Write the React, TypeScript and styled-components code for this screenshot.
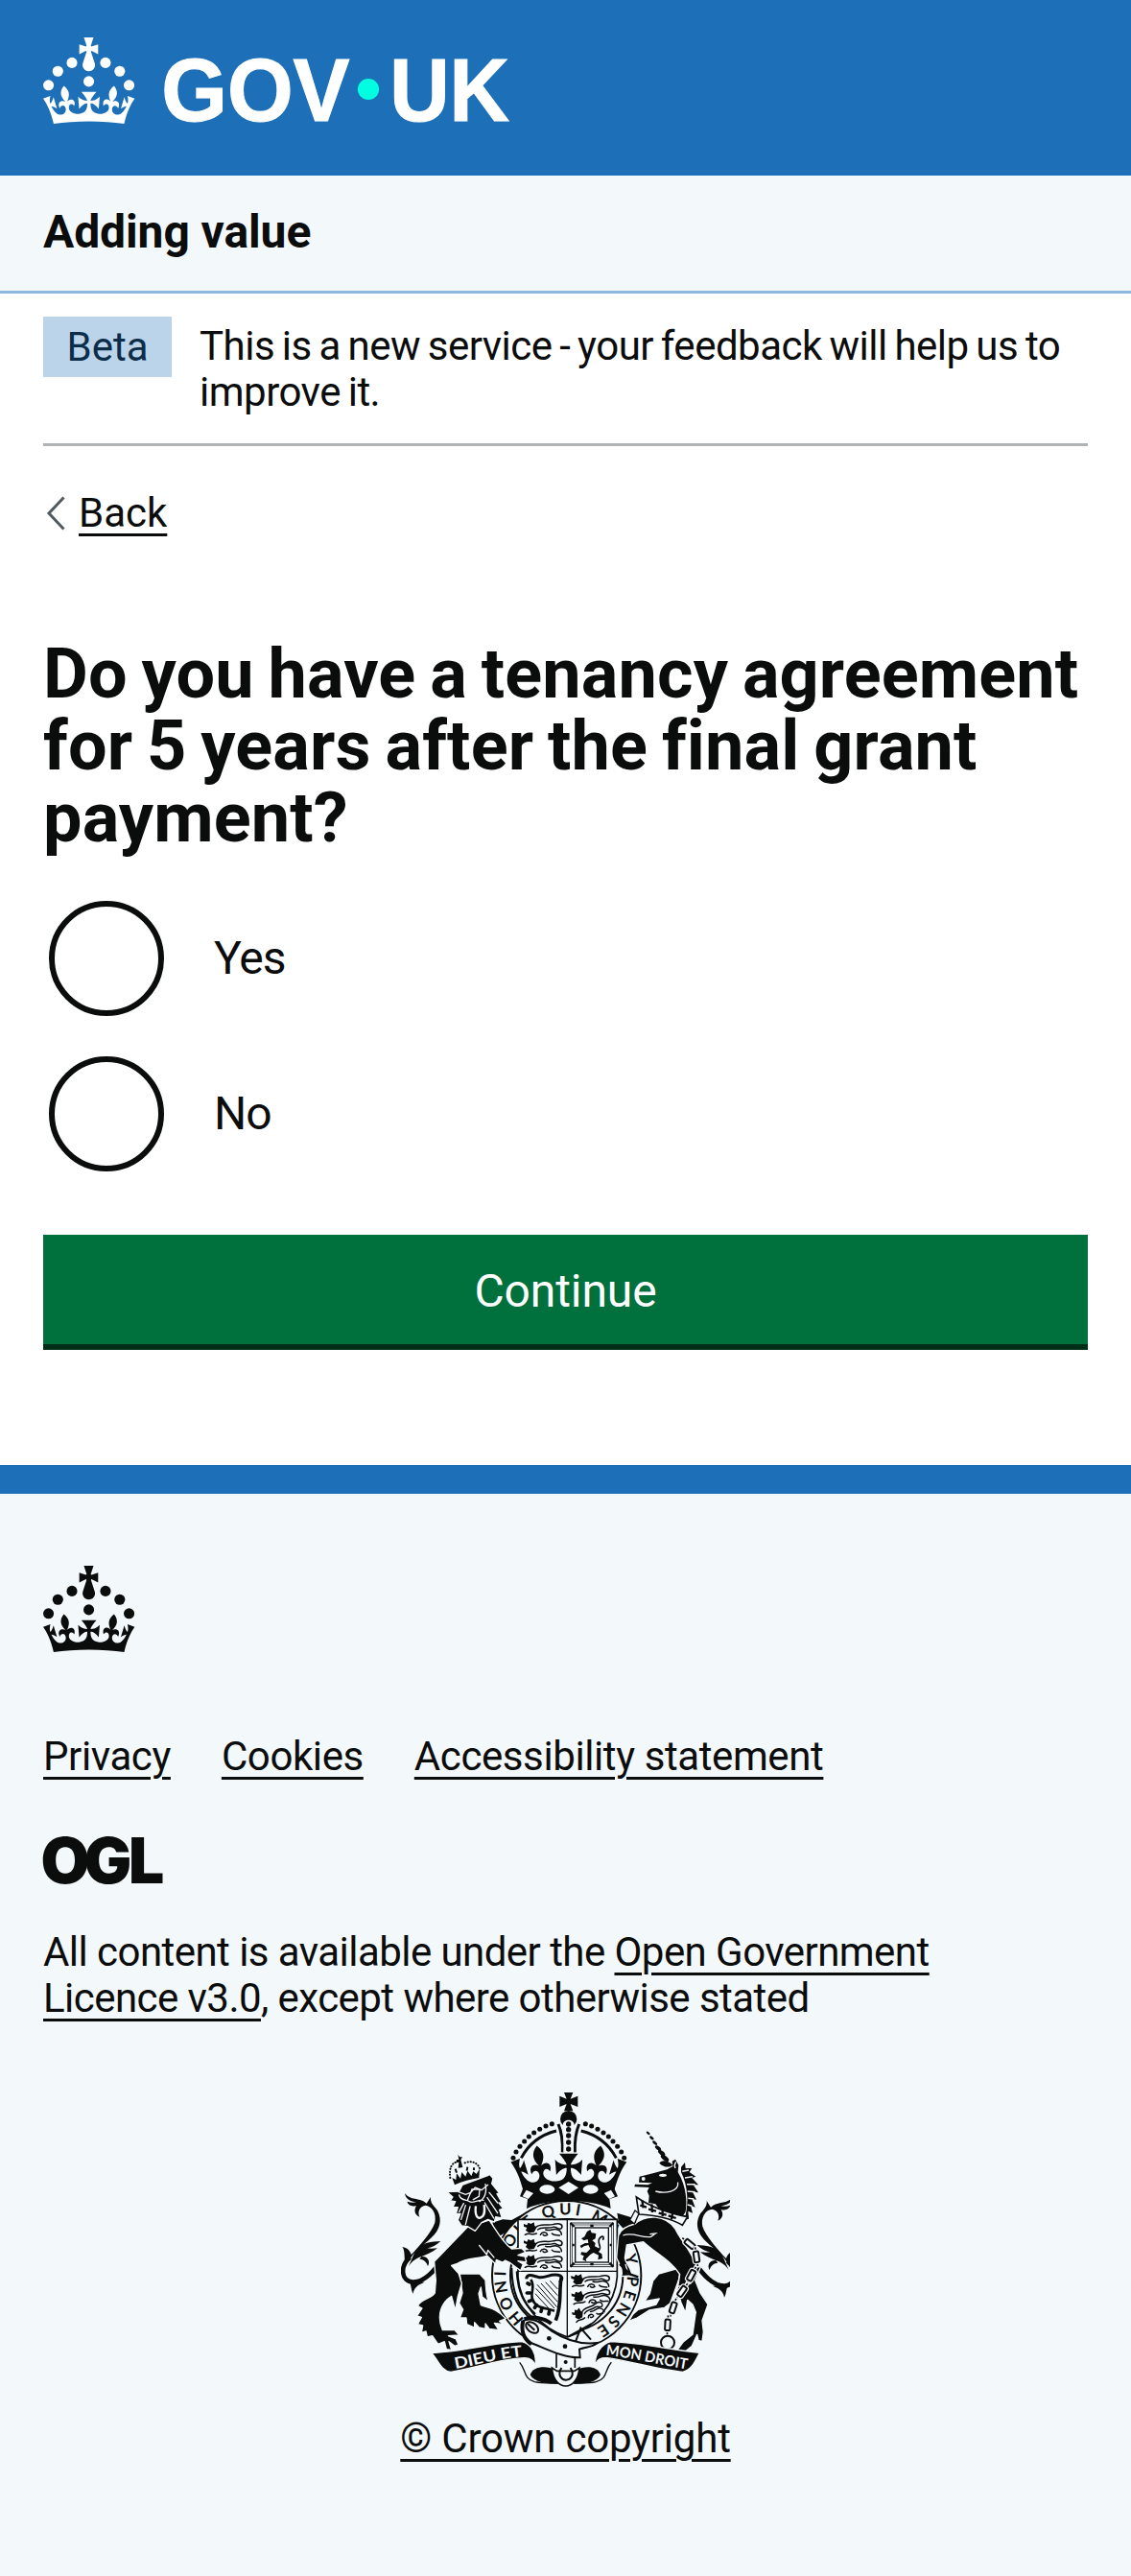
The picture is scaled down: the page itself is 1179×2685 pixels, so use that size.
import React, { useState } from 'react';
import styled, { createGlobalStyle } from 'styled-components';

const ink = '#0b0c0c';
const blue = '#1d70b8';
const pale = '#f3f8fb';

const GlobalStyle = createGlobalStyle`
  *, *::before, *::after { box-sizing: border-box; }
  body { margin: 0; background: ${pale}; }
`;

const Page = styled.div`
  display: flex;
  flex-direction: column;
  min-height: 2685px;
  background: #fff;
  color: ${ink};
  font-family: Roboto, "Liberation Sans", sans-serif;
  font-size: 42px;
  line-height: 48px;
  letter-spacing: -0.55px;
`;

const Header = styled.header`
  height: 183px;
  padding: 39px 45px 0;
  background: ${blue};
  color: #fff;
`;

const Svg = styled.svg`
  display: block;
  overflow: visible;
`;

const LogoText = styled.text`
  font-family: "Liberation Sans", Arial, sans-serif;
  font-weight: 700;
  font-size: 62px;
  letter-spacing: 0;
  fill: currentColor;
  stroke: currentColor;
  stroke-width: 0.8px;
`;

const ServiceBar = styled.div`
  display: flex;
  align-items: center;
  height: 123px;
  padding: 0 45px 2px;
  background: ${pale};
  border-bottom: 3px solid #8eb8dc;
  font-size: 48px;
  font-weight: 700;
  letter-spacing: -0.1px;
`;

const Container = styled.div`
  padding: 0 45px;
`;

const PhaseBanner = styled.div`
  display: flex;
  align-items: flex-start;
  gap: 29px;
  height: 159px;
  padding-top: 24px;
  border-bottom: 3px solid #b1b4b6;
`;

const Tag = styled.strong`
  display: flex;
  align-items: center;
  justify-content: center;
  width: 134px;
  height: 63px;
  background: #bbd4ea;
  color: #0c2d4a;
  font-weight: 400;
  letter-spacing: 0;
`;

const PhaseText = styled.span`
  flex: 1;
  padding-top: 7px;
  letter-spacing: -0.5px;
  word-spacing: -2.2px;
`;

const Link = styled.a`
  color: ${ink};
  text-decoration: underline;
  text-decoration-thickness: 3px;
  text-underline-offset: 7px;
`;

const BackRow = styled.div`
  display: flex;
  align-items: center;
  gap: 14px;
  margin-top: 46px;
  padding-left: 3px;
  letter-spacing: 0;
`;

const Heading = styled.h1`
  margin: 106px 0 49px;
  font-size: 72px;
  line-height: 75px;
  font-weight: 700;
  letter-spacing: 0.15px;
  word-spacing: -3.2px;
`;

const Radios = styled.div`
  display: flex;
  flex-direction: column;
  gap: 42px;
  padding-left: 6px;
`;

const RadioRow = styled.label`
  display: flex;
  align-items: center;
  gap: 52px;
  height: 120px;
  padding-bottom: 1px;
  font-size: 48px;
  letter-spacing: -1px;
`;

const RadioInput = styled.input`
  appearance: none;
  flex: none;
  width: 120px;
  height: 120px;
  margin: 0;
  border: 6px solid ${ink};
  border-radius: 50%;
  background: ${p => (p.checked ? `radial-gradient(circle, ${ink} 30px, transparent 31px)` : 'transparent')};
`;

const Button = styled.button`
  display: block;
  width: 100%;
  height: 120px;
  margin: 66px 0 120px;
  padding: 3px 0 0;
  border: 0;
  border-bottom: 6px solid #002d18;
  background: #00703c;
  color: #fff;
  font-family: inherit;
  font-size: 48px;
  letter-spacing: -0.1px;
`;

const Footer = styled.footer`
  flex: 1;
  padding: 75px 45px 0;
  border-top: 30px solid ${blue};
  background: ${pale};
`;

const FooterLinks = styled.nav`
  display: flex;
  gap: 53px;
  margin-top: 85px;
  letter-spacing: -0.4px;
`;

const OglSvg = styled(Svg)`
  margin-top: 59px;
`;

const OglText = styled.text`
  font-family: Inter, sans-serif;
  font-weight: 900;
  font-size: 66px;
  letter-spacing: 0;
  fill: ${ink};
`;

const Licence = styled.p`
  max-width: 1000px;
  margin: 47px 0 73px;
`;

const Copyright = styled.div`
  display: flex;
  flex-direction: column;
  align-items: center;
  gap: 28px;
  letter-spacing: -0.2px;
`;

const CrestText = styled.text<{ $size: number; $fill: string }>`
  font-family: Lato, "Open Sans", sans-serif;
  font-weight: 700;
  font-size: ${p => p.$size}px;
  letter-spacing: 0;
  word-spacing: 0;
  fill: ${p => p.$fill};
`;

const crownBase =
  'M37,37.9s-3.4,3.8-4.1,6.1c2.2,0,4.2-.5,6.4-2.8l-.7,8.5c-2-2.8-4.4-4.1-5.7-3.8.1,3.1.5,6.7,5.8,7.2,3.7.3,6.7-1.5,7-3.8.4-2.6-2-4.3-3.7-1.6-1.4-4.5,2.4-6.1,4.9-3.2-1.9-4.5-1.8-7.7,2.4-10.9,3,4,2.6,7.3-1.2,11.1,2.4-1.3,6.2,0,4,4.6-1.2-2.8-3.7-2.2-4.2.2-.3,1.7.7,3.7,3,4.2,1.9.3,4.7-.9,7-5.9-1.3,0-2.4.7-3.9,1.7l2.4-8c.6,2.3,1.4,3.7,2.2,4.5.6-1.6.5-2.8,0-5.3l5,1.8c-2.6,3.6-5.2,8.7-7.3,17.5-7.4-1.1-15.7-1.7-24.5-1.7h0c-8.8,0-17.1.6-24.5,1.7-2.1-8.9-4.7-13.9-7.3-17.5l5-1.8c-.5,2.5-.6,3.7,0,5.3.8-.8,1.6-2.3,2.2-4.5l2.4,8c-1.5-1-2.6-1.7-3.9-1.7,2.3,5,5.2,6.2,7,5.9,2.3-.4,3.3-2.4,3-4.2-.5-2.4-3-3.1-4.2-.2-2.2-4.6,1.6-6,4-4.6-3.7-3.7-4.2-7.1-1.2-11.1,4.2,3.2,4.3,6.4,2.4,10.9,2.5-2.8,6.3-1.3,4.9,3.2-1.8-2.7-4.1-1-3.7,1.6.3,2.3,3.3,4.1,7,3.8,5.4-.5,5.7-4.2,5.8-7.2-1.3-.2-3.7,1-5.7,3.8l-.7-8.5c2.2,2.3,4.2,2.7,6.4,2.8-.7-2.3-4.1-6.1-4.1-6.1h10.6Z';

const crownCross =
  'M33.1,9.8c.2-.1.3-.3.5-.5l4.6,2.4v-6.8l-4.6,1.5c-.1-.2-.3-.3-.5-.5l1.9-5.9h-6.7l1.9,5.9c-.2.1-.3.3-.5.5l-4.6-1.5v6.8l4.6-2.4c.1.2.3.3.5.5l-2.6,8c-.9,2.8,1.2,5.7,4.1,5.7h0c3,0,5.1-2.9,4.1-5.7l-2.6-8Z';

const crownPearls = [[20, 17.6], [10.2, 23.5], [3.7, 33.2], [31.7, 30.6], [43.3, 17.6], [53.2, 23.5], [59.7, 33.2]];

const Crown = () => (
  <g>
    {crownPearls.map(([x, y]) => <circle key={x} cx={x} cy={y} r={3.7} />)}
    <path d={crownCross} />
    <path d={crownBase} />
  </g>
);

const GovLogo = () => (
  <Svg width="486" height="90" viewBox="0 0 324 60" fill="currentColor" role="img" aria-label="GOV.UK">
    <Crown />
    <LogoText x="82.2" y="57.8" textLength="130.8" lengthAdjust="spacingAndGlyphs">GOV</LogoText>
    <circle cx="226" cy="36" r="7.4" fill="#00ffe0" />
    <LogoText x="240.8" y="57.8" textLength="83.2" lengthAdjust="spacingAndGlyphs">UK</LogoText>
  </Svg>
);

const Tail = () => (
  <g fill={ink}>
    <path d="M66 378C82 402 112 390 134 410L147 390C145 410 158 418 168 432C184 462 176 492 150 516C120 545 92 560 80 590L66 592C64 570 66 556 58 546C76 548 84 562 86 570C110 545 150 500 160 470C166 440 150 418 130 416C110 420 106 438 112 452C96 446 94 430 102 418C84 420 74 412 74 404C84 408 94 408 102 406C84 404 68 396 66 378Z" />
    <path d="M98 560C120 530 150 530 178 528C165 540 150 548 136 550C150 552 158 550 168 550C150 565 130 572 108 580C96 586 84 596 78 606Z" />
    <path d="M82 578C50 606 54 652 90 656C128 658 158 620 186 582" fill="none" stroke={ink} strokeWidth="14" />
    <path d="M78 652C88 666 84 680 92 692C94 675 105 665 128 656Z" />
    <path d="M118 576C140 574 146 594 138 606C134 594 128 586 112 584Z" />
  </g>
);

/* Walking lion of the royal shield, about 125 by 46 units. */
const Passant = () => (
  <g fill="none" stroke={ink} strokeWidth="4.5" strokeLinecap="round">
    <path d="M4 8L14 12L18 4L26 8L36 3L38 14L44 20L36 34L20 36L10 28L14 20L4 16Z" fill={ink} stroke="none" />
    <path d="M42 18C58 4 78 16 98 9C118 3 128 12 122 22C112 28 108 16 96 18C80 24 62 14 48 26" />
    <path d="M72 26C88 32 98 20 110 26C120 30 122 36 122 42" />
    <path d="M8 42C20 34 28 44 44 38M56 42C62 30 76 34 78 42C72 46 66 44 64 42M92 38C98 46 108 42 116 44" />
  </g>
);

const domeDots = [[405, 268], [414, 249], [426, 232], [440, 216], [454, 201], [470, 189], [488, 178], [507, 168], [526, 161]];
const hornParts = [[827, 190, 3.5, 7], [838, 205, 4, 8], [848, 221, 4.5, 9], [858, 237, 5.5, 11], [869, 252, 6.5, 13], [879, 268, 7, 15]];
const chainLinks = [[957, 537, -50], [978, 577, -8], [962, 635, 28], [933, 685, 35], [905, 736, 18], [888, 790, 3]];

const RoyalArms = () => (
  <Svg width="343" height="310" viewBox="54 60 1029 930" style={{ overflow: 'hidden' }} fill={ink}>
    <Tail />
    <g transform="translate(1157 12) scale(-1 1)"><Tail /></g>

    {/* garter */}
    <path d="M340 470L372 460L400 462L440 440L430 470L350 520Z" />
    <path d="M730 440L780 455L800 480L790 520L740 500Z" />
    <circle cx="572" cy="635" r="233" fill={pale} stroke={ink} strokeWidth="6" />
    <circle cx="572" cy="635" r="176" fill="none" stroke={ink} strokeWidth="6" />
    <defs>
      <path id="garter" d="M440 772A190 190 0 1 1 662 802" />
      <path id="mottoLeft" d="M224 927C290 916 360 894 440 887" />
      <path id="mottoRight" d="M694 884C770 892 860 914 956 930" />
    </defs>
    <CrestText $size={50} $fill={ink}>
      <textPath href="#garter" textLength="950">HONI SOIT QUI MAL Y PENSE</textPath>
    </CrestText>

    {/* shield */}
    <path d="M420 460H730V640C724 725 660 800 575 828C490 800 426 725 420 640Z" fill={pale} stroke={ink} strokeWidth="5" />
    <path d="M574 460V826M420 622H730" stroke={ink} strokeWidth="4" />
    <g transform="translate(434 466)"><Passant /></g>
    <g transform="translate(434 518)"><Passant /></g>
    <g transform="translate(434 568)"><Passant /></g>
    <g transform="translate(582 628)"><Passant /></g>
    <g transform="translate(582 684) rotate(-6)"><Passant /></g>
    <g transform="translate(582 744) rotate(-20) scale(.82 1)"><Passant /></g>
    <g fill="none" stroke={ink}>
      <rect x="584" y="471" width="134" height="137" strokeWidth="2.5" />
      <rect x="590" y="477" width="122" height="125" strokeWidth="2" />
      <rect x="599" y="486" width="104" height="108" strokeWidth="4" />
      <path d="M584 471l12 12M718 471l-12 12M584 608l12-12M718 608l-12-12" strokeWidth="7" />
      <path d="M646 480h10M646 600h10M590 540h6M707 540h6" strokeWidth="8" />
    </g>
    <path d="M636 498l10-6 4 10 14 2-2 16-10 6 10 8-2 10 16 8-6 8 12 8 2 14-14 4 2-14-16-8-10 6-14 14 2 8-12-6 4-12-10-4 2-8 16 2 12-12-6-12-14 4-8 6-4-8 16-8 10 0-2-12-12 4-8-6 10-6z" />
    <path d="M668 560C690 548 660 530 678 516C688 508 690 520 684 524" fill="none" stroke={ink} strokeWidth="5" />
    <g fill="none" stroke={ink}>
      <path d="M446 646C448 628 466 636 482 640C506 648 524 624 552 636C562 642 556 654 548 652" strokeWidth="9" />
      <path d="M460 648C476 672 456 690 466 712C476 738 506 736 534 746" strokeWidth="8" />
      <path d="M556 640C546 680 560 720 538 776" strokeWidth="11" />
      <path d="M450 660l6 3M448 690l10 0M454 716l10-4M472 736l6-8M492 748l2-8M516 756l2-8" strokeWidth="11" strokeLinecap="round" />
      <path d="M480 664l62 70M492 660l52 58M506 656l38 42M520 652l24 26M476 676l58 62M474 692l42 46" strokeWidth="3" />
      <path d="M400 612C402 690 420 730 462 764M416 622C420 690 440 725 474 756" strokeWidth="6" />
    </g>

    {/* lion */}
    <g stroke={pale} strokeWidth="4" strokeLinejoin="round">
      <path d="M238 630L300 630L318 650C320 680 320 695 328 718L308 702L304 672L297 692L304 728C330 738 350 736 382 770L362 778L376 788L346 784L360 806L330 802L318 786L318 802L298 798L284 782L284 798L260 788L258 768L238 768L248 742L236 722L246 690Z" />
      <path d="M262 484L158 592L163 650L160 690C150 708 120 706 106 730L120 738L104 762L118 766L106 788L122 792L118 814L132 810L136 828L152 824L170 850L190 842L196 866L212 868L204 842L222 856L234 852L226 834L202 824L236 822L222 806L184 806C164 760 180 720 212 700L224 744L232 700L244 660L234 628L212 604L230 598C260 580 290 584 324 574L350 600L352 586L372 594L380 588L396 596L428 620L436 600L420 590L446 594L442 576L420 572L444 562L430 550L400 552C370 530 350 490 330 462Z" />
      <path d="M198 374L236 372L246 352L332 320L342 332L338 348L362 378L354 380L371 410L360 408L374 426L362 430L370 456L350 452L346 468L326 460L306 470L286 496L262 482L244 480L232 462L240 442L226 442L232 422L216 422L224 404L208 402L216 390Z" />
      <path d="M298 540l24 30 4-14 20 24M212 604l24 26" fill="none" />
    </g>
    <g fill="none" stroke={pale} strokeWidth="4" strokeLinecap="round">
      <path d="M234 374L256 382L272 376L286 360L306 368L326 352M262 400L276 366L300 366L298 388L280 398M236 384C240 402 262 398 268 404C280 412 300 396 312 400M318 350C322 370 318 392 300 404M250 410L236 436M256 416L242 460M270 420L256 476M330 376L356 408M324 392L356 440M316 408L344 456" />
    </g>
    <path d="M288 418C284 448 294 460 304 454C318 448 316 430 314 414" fill="none" stroke={pale} strokeWidth="7" />
    <path d="M294 420L300 442L308 418Z" />
    <path d="M214 330L222 352C246 340 272 334 298 330L300 302L290 318L280 310L274 324L262 308L256 326L244 312L240 332L228 316L226 336Z" />
    <path d="M208 330C204 300 212 282 232 280M300 300C294 284 276 274 252 284" fill="none" stroke={ink} strokeWidth="6" strokeDasharray="1 8" strokeLinecap="round" />
    <path d="M232 258l6 7 8 0-5 8 2 8 4 16-14 2 2-18-9 2 2-10 7 0z" />
    <path d="M224 302l4 12M262 296l-2 12M282 298l0 8" stroke={ink} strokeWidth="6" />

    {/* crown */}
    <path d="M564 63h28l-8 20 23-9v34l-23-9 8 22h-28l8-22-22 9V74l22 9z" />
    <circle cx="578" cy="146" r="26" />
    {domeDots.map(([x, y]) => (
      <g key={x}><circle cx={x} cy={y} r="7.6" /><circle cx={1157 - x} cy={y} r="7.6" /></g>
    ))}
    <g fill="none" stroke={ink} strokeWidth="9">
      <path d="M430 268C452 226 492 195 540 183M727 268C705 226 665 195 617 183" />
      <path d="M546 162C558 190 560 220 559 250M611 162C599 190 597 220 598 250" />
    </g>
    <path d="M562 252C564 210 560 185 560 164C562 144 594 144 596 164C596 185 592 210 594 252Z" fill={pale} />
    {[162, 179, 198, 219, 240].map(y => <circle key={y} cx="578" cy={y} r="8" />)}
    <path transform="translate(397.3 38) scale(5.7)" d={crownBase} />
    <path d="M440 352L426 388L450 396L447 426C520 394 636 394 710 426L706 396L732 388L716 352C640 340 520 340 440 352Z" />
    <g fill={pale}>
      <path d="M578 342L609 361L578 381L547 361Z" />
      <ellipse cx="511" cy="366" rx="24" ry="14" />
      <ellipse cx="647" cy="366" rx="24" ry="14" />
      <path d="M446 368L468 378L452 396L434 388Z" />
      <path d="M711 368L689 378L705 396L723 388Z" />
    </g>

    {/* unicorn */}
    {hornParts.map(([x, y, a, b]) => <ellipse key={x} cx={x} cy={y} rx={a} ry={b} transform={`rotate(-52 ${x} ${y})`} />)}
    <path d="M862 284C872 272 890 276 904 290C890 300 874 296 862 284Z" />
    <path d="M798 344L800 326L842 316L886 304L904 294L902 278L912 272L922 290L920 312C944 350 950 400 944 436L930 458C900 452 862 436 850 412L828 408L830 386L824 372L830 360L784 358L786 350L826 352L840 346Z" />
    <path d="M930 296L942 282L944 300L964 300L956 312L976 326L964 330L984 352L968 352L984 376L966 374L978 398L964 396L974 422L960 416L966 440L952 434L954 458L940 462C956 410 950 350 930 312Z" />
    <path d="M934 310L954 306M942 330L966 326M948 350L974 350M950 372L974 374M952 394L970 396M950 414L964 418" stroke={pale} strokeWidth="4.5" />
    <ellipse cx="873" cy="322" rx="12" ry="5" fill={pale} />
    <circle cx="812" cy="333" r="6" fill={pale} />
    <path d="M850 372C880 380 924 374 920 344M912 300C906 290 912 284 914 280" fill="none" stroke={pale} strokeWidth="4" />
    <g stroke={pale} strokeWidth="4" strokeLinejoin="round">
      <path d="M932 610L926 640L896 722L878 736L830 744L792 768L766 778L780 756L796 742L852 726L862 708L816 716L832 692L842 652L860 630Z" />
      <path d="M992 606L974 650L990 690L1014 726L996 776L1000 812L996 842L984 838L980 820L964 856L944 872L914 874L936 844L966 820L976 750L966 726L950 712L944 752L930 720L918 680L930 600Z" />
      <path d="M786 474C820 444 880 444 912 490C926 522 958 552 978 604L960 660L920 670L926 632C900 590 856 570 812 530L760 540L754 580C756 600 776 610 776 636L742 638C752 620 736 600 728 580L734 510C740 492 760 480 786 474Z" />
    </g>
    <path d="M748 510C780 498 810 520 836 514L850 504L832 506M756 600L764 628" fill="none" stroke={pale} strokeWidth="4" />
    <path d="M738 600L772 632L796 640" fill="none" stroke={ink} strokeWidth="7" />
    <path d="M790 390C830 418 890 440 950 452L934 478C890 452 840 446 798 444Z" fill={pale} stroke={ink} strokeWidth="5" />
    <path d="M808 400l4 24m-10-8l20 6M838 412l2 26m-12-10l24 6M872 424l0 26m-12-10l24 6M904 436l-4 24m-10-12l24 8" stroke={ink} strokeWidth="7" />
    <path d="M770 462l16-30 12 10-14 32z" fill={pale} stroke={ink} strokeWidth="4" />
    {chainLinks.map(([x, y, r]) => (
      <g key={x} transform={`translate(${x} ${y}) rotate(${r})`} fill="none">
        <path d="M0 -34V34" stroke={pale} strokeWidth="12" />
        <path d="M0 -30V30" stroke={ink} strokeWidth="5" />
        <rect x="-8" y="-17" width="16" height="34" rx="4" fill={pale} stroke={pale} strokeWidth="13" />
        <rect x="-8" y="-17" width="16" height="34" rx="4" fill={pale} stroke={ink} strokeWidth="6" />
      </g>
    ))}
    <circle cx="888" cy="845" r="21" fill={pale} stroke={ink} strokeWidth="6" />

    {/* ribbon and belt */}
    <path d="M600 842L616 800L648 836M578 826L650 786" fill="none" stroke={ink} strokeWidth="6" />
    <path d="M150 877C240 875 340 845 432 842C462 850 480 880 474 918C470 902 460 893 440 893C370 895 280 925 210 937C180 935 170 900 150 877Z" stroke={pale} strokeWidth="4" />
    <path d="M988 877C900 868 800 845 710 842C680 850 660 880 660 918C668 895 680 892 700 893C780 905 860 930 935 937C965 930 975 900 988 877Z" stroke={pale} strokeWidth="4" />
    <CrestText $size={48} $fill={pale}><textPath href="#mottoLeft" textLength="214" lengthAdjust="spacingAndGlyphs">DIEU ET</textPath></CrestText>
    <CrestText $size={46} $fill={pale}><textPath href="#mottoRight" textLength="258" lengthAdjust="spacingAndGlyphs">MON DROIT</textPath></CrestText>
    <path d="M458 946C466 918 510 916 536 930L546 974C510 974 470 970 458 946Z" />
    <path d="M678 946C670 918 630 916 604 930L594 974C630 974 668 970 678 946Z" />
    <path d="M425 907C446 930 436 958 472 968C500 974 530 972 545 972M712 907C690 930 702 958 664 968C640 974 610 972 595 972" fill="none" stroke={ink} strokeWidth="4" />
    <path d="M540 876V924M598 890V924" fill="none" stroke={ink} strokeWidth="5" />
    <path d="M526 924L542 934H596L612 924C606 1000 532 1000 526 924Z" fill={pale} stroke={ink} strokeWidth="5" />
    <path d="M556 924C540 950 560 962 570 962C582 962 600 950 584 924" fill="none" stroke={ink} strokeWidth="6" />
    <path d="M438 776C470 762 500 790 524 808C570 838 620 852 668 846C650 862 626 858 612 866L614 892C560 894 500 860 460 846C432 824 426 796 438 776Z" fill={pale} stroke={ink} strokeWidth="6" />
    <path d="M440 772C460 762 500 766 524 786M436 776C428 810 440 836 462 850" fill="none" stroke={ink} strokeWidth="12" />
    <ellipse cx="464" cy="798" rx="14" ry="22" transform="rotate(-52 464 798)" fill={pale} stroke={ink} strokeWidth="6" />
    <path d="M450 786L472 806" stroke={ink} strokeWidth="6" />
    <circle cx="517" cy="832" r="7" />
    <circle cx="567" cy="857" r="7" />
    <circle cx="569" cy="906" r="6" />
  </Svg>
);

const options = ['Yes', 'No'];

export default function App() {
  const [answer, setAnswer] = useState('');
  return (
    <Page>
      <GlobalStyle />
      <Header><GovLogo /></Header>
      <ServiceBar>Adding value</ServiceBar>
      <Container>
        <PhaseBanner>
          <Tag>Beta</Tag>
          <PhaseText>This is a new service - your feedback will help us to improve it.</PhaseText>
        </PhaseBanner>
        <BackRow>
          <Svg width="20" height="36" viewBox="0 0 20 36" fill="none">
            <path d="M18.5 1.5L3 18L18.5 34.5" stroke="#505a5f" strokeWidth="3" />
          </Svg>
          <Link>Back</Link>
        </BackRow>
        <Heading>Do you have a tenancy agreement for 5 years after the final grant payment?</Heading>
        <Radios>
          {options.map(o => (
            <RadioRow key={o}>
              <RadioInput type="radio" name="tenancy" checked={answer === o} onChange={() => setAnswer(o)} />
              {o}
            </RadioRow>
          ))}
        </Radios>
        <Button type="submit">Continue</Button>
      </Container>
      <Footer>
        <Svg width="96" height="90" viewBox="0 0 64 60" fill={ink}><Crown /></Svg>
        <FooterLinks>
          <Link>Privacy</Link>
          <Link>Cookies</Link>
          <Link>Accessibility statement</Link>
        </FooterLinks>
        <OglSvg width="123" height="50" viewBox="0 0 123 50" role="img" aria-label="Open Government Licence">
          <OglText x="-2.5 42.5 89" y="49">OGL</OglText>
        </OglSvg>
        <Licence>
          All content is available under the <Link>Open Government Licence v3.0</Link>, except where otherwise stated
        </Licence>
        <Copyright>
          <RoyalArms />
          <Link>© Crown copyright</Link>
        </Copyright>
      </Footer>
    </Page>
  );
}
